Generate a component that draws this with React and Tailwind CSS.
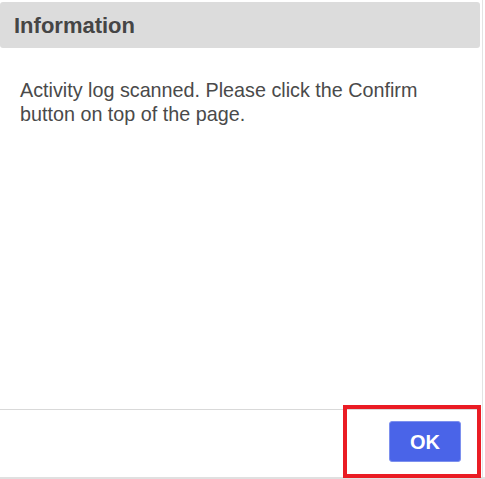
export default function App() {
  return (
    <div className="relative w-[485px] h-[479px] bg-white overflow-hidden" style={{ fontFamily: '"Liberation Sans", Arial, sans-serif' }}>
      <div className="flex flex-col w-[483px] h-[477px] border-r border-[#e3e3e3]">
        <div className="mt-[2px] h-[46px] w-[480px] bg-[#dcdcdc] rounded-[3px] flex items-center px-[14px]">
          <span className="text-[22px] font-bold text-[#454545]">Information</span>
        </div>
        <div className="flex-1 px-5 pt-[30px] w-[480px]">
          <p className="text-[19.75px] leading-[24px] text-[#4a4a4a]">
            Activity log scanned. Please click the Confirm button on top of the page.
          </p>
        </div>
        <div className="h-[68px] w-[480px] border-t border-[#d9d9d9] flex justify-end items-start pt-[11px] pr-[19px]">
          <button className="w-[72px] h-[41px] bg-[#4a64e8] border border-[#7d90ee] rounded-[3px] text-white font-bold text-[20px] flex items-center justify-center">
            OK
          </button>
        </div>
      </div>
      <div className="h-[2px] w-[485px] bg-[#e0e0e0]" />
      <div className="absolute left-[343px] top-[405px] w-[138px] h-[73px] border-[4px] border-[#ea1c24]" />
    </div>
  );
}
